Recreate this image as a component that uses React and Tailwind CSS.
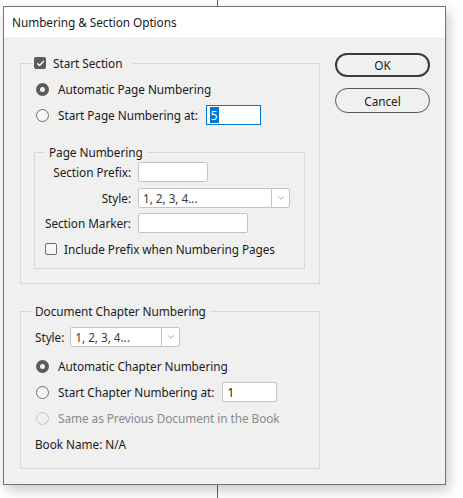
import { ChevronDown } from 'lucide-react';

const Radio = ({ checked, disabled }) => {
  if (checked) {
    return (
      <span className="w-[13px] h-[13px] rounded-full bg-[#5b5b5b] flex items-center justify-center shrink-0">
        <span className="w-[5px] h-[5px] rounded-full bg-[#f4f4f4]" />
      </span>
    );
  }
  return (
    <span
      className={`w-[13px] h-[13px] rounded-full border shrink-0 ${
        disabled ? 'border-[#c6c6c6] bg-[#f0f0f0]' : 'border-[#6e6e6e] bg-[#f7f7f7]'
      }`}
    />
  );
};

const Checkbox = ({ checked }) =>
  checked ? (
    <span className="w-[12px] h-[12px] rounded-[2px] bg-[#5b5b5b] flex items-center justify-center shrink-0">
      <svg width="9" height="9" viewBox="0 0 10 10" fill="none">
        <path d="M1.8 5.2 L4 7.3 L8.3 2.6" stroke="#fff" strokeWidth="1.6" strokeLinecap="round" strokeLinejoin="round" />
      </svg>
    </span>
  ) : (
    <span className="w-[12px] h-[12px] rounded-[2px] border border-[#6e6e6e] bg-[#f7f7f7] shrink-0" />
  );

const Select = ({ width }) => (
  <div className={`${width} h-[20px] flex border border-[#c4c4c4] bg-white rounded-[2px]`}>
    <div className="flex-1 pl-[4px] flex items-center text-[#3c3c3c]">1, 2, 3, 4...</div>
    <div className="w-[18px] border-l border-[#c4c4c4] flex items-center justify-center">
      <ChevronDown className="w-[10px] h-[10px] text-[#6a6a6a]" strokeWidth={1.5} />
    </div>
  </div>
);

const Field = ({ width, children }) => (
  <div className={`${width} h-[20px] border border-[#c4c4c4] bg-white rounded-[2px] flex items-center pl-[4px]`}>
    {children}
  </div>
);

export default function App() {
  return (
    <div
      className="relative w-[463px] h-[498px] bg-white overflow-hidden text-[11.8px] tracking-[-0.05px] leading-[16px] text-[#1b1b1b]"
      style={{ fontFamily: '"Noto Sans", "Liberation Sans", sans-serif' }}
    >
      {/* artboard guide behind the dialog */}
      <div className="absolute left-[217px] top-0 w-px h-full bg-[#8a3ad4]" />

      <div className="relative z-10 ml-[3px] mt-[6px] w-[443px] h-[479px] border border-[#747474] bg-[#f0f0f0] shadow-[3px_5px_12px_rgba(0,0,0,0.22)] flex flex-col">
        <div className="h-[30px] bg-white flex items-center pl-[8px] shrink-0">Numbering &amp; Section Options</div>

        <div className="flex pl-[16px]">
          {/* Left column */}
          <div className="w-[300px] pt-[18px]">
            <fieldset className="border border-[#d8d8d8] pl-[15px] pr-[14px] pb-[14px]">
              <legend className="-ml-[3px] pl-[1px] pr-[11px]">
                <span className="flex items-center gap-[7px]">
                  <Checkbox checked />
                  <span>Start Section</span>
                </span>
              </legend>
              <div className="mt-[8px] h-[20px] flex items-center gap-[9px]">
                <Radio checked />
                <span>Automatic Page Numbering</span>
              </div>
              <div className="mt-[6px] h-[20px] flex items-center">
                <Radio />
                <span className="ml-[9px]">Start Page Numbering at:</span>
                <div className="ml-[8px] w-[55px] h-[20px] border border-[#0078d7] bg-white flex items-center pl-[3px]">
                  <span className="bg-[#0078d7] text-white px-[1px] leading-[16px]">5</span>
                </div>
              </div>

              <fieldset className="mt-[19px] -ml-[2px] w-[271px] border border-[#d8d8d8] pb-[11px]">
                <legend className="ml-[10px] px-[4px]">Page Numbering</legend>
                <div className="mt-[2px] flex items-center">
                  <span className="w-[96px] text-right">Section Prefix:</span>
                  <div className="ml-[7px]">
                    <Field width="w-[70px]" />
                  </div>
                </div>
                <div className="mt-[6px] flex items-center">
                  <span className="w-[96px] text-right">Style:</span>
                  <div className="ml-[7px]">
                    <Select width="w-[152px]" />
                  </div>
                </div>
                <div className="mt-[5px] flex items-center">
                  <span className="w-[96px] text-right">Section Marker:</span>
                  <div className="ml-[7px]">
                    <Field width="w-[110px]" />
                  </div>
                </div>
                <div className="mt-[8px] h-[16px] pl-[10px] flex items-center gap-[7px]">
                  <Checkbox />
                  <span>Include Prefix when Numbering Pages</span>
                </div>
              </fieldset>
            </fieldset>

            <fieldset className="mt-[19px] border border-[#d8d8d8] pl-[14px] pb-[14px]">
              <legend className="-ml-[4px] px-[4px]">Document Chapter Numbering</legend>
              <div className="mt-[8px] flex items-center">
                <span>Style:</span>
                <div className="ml-[6px]">
                  <Select width="w-[110px]" />
                </div>
              </div>
              <div className="mt-[9px] h-[20px] flex items-center gap-[9px] pl-[1px]">
                <Radio checked />
                <span>Automatic Chapter Numbering</span>
              </div>
              <div className="mt-[6px] h-[20px] flex items-center pl-[1px]">
                <Radio />
                <span className="ml-[9px]">Start Chapter Numbering at:</span>
                <div className="ml-[8px]">
                  <Field width="w-[55px]">1</Field>
                </div>
              </div>
              <div className="mt-[6px] h-[20px] flex items-center gap-[9px] pl-[1px]">
                <Radio disabled />
                <span className="text-[#8a8a8a]">Same as Previous Document in the Book</span>
              </div>
              <div className="mt-[6px] h-[20px] flex items-center">Book Name: N/A</div>
            </fieldset>
          </div>

          {/* Right column */}
          <div className="ml-[15px] w-[95px] pt-[16px] flex flex-col gap-[11px]">
            <button className="h-[24px] rounded-full border-2 border-[#3a3a3a] bg-[#f0f0f0]">OK</button>
            <button className="h-[25px] rounded-full border border-[#555] bg-[#f0f0f0]">Cancel</button>
          </div>
        </div>
      </div>
    </div>
  );
}
